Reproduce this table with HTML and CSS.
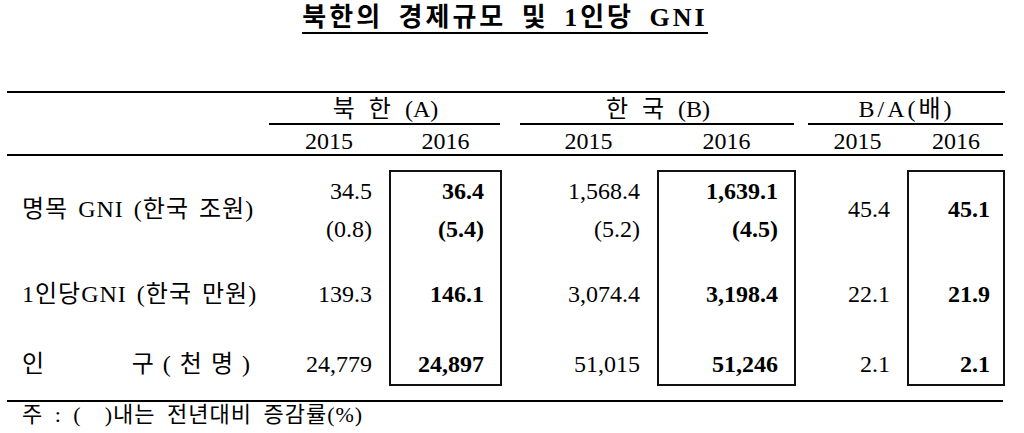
FILE: index.html
```html
<!DOCTYPE html>
<html>
<head>
    <title>북한의 경제규모 및 1인당 GNI</title>
    <link rel="stylesheet" href="styles.css">
</head>
<body>
    <div id="sheet">
        <div class="title"><span>북한의 경제규모 및 1인당 GNI</span></div>

        <div class="grid">
            <!-- group headers -->
            <div class="group g-nk">북 한 (A)</div>
            <div class="group g-sk">한 국 (B)</div>
            <div class="group g-ba">B/A(배)</div>
            <div class="subline s-nk"></div>
            <div class="subline s-sk"></div>
            <div class="subline s-ba"></div>

            <div class="year" style="grid-column: 2">2015</div>
            <div class="year" style="grid-column: 3">2016</div>
            <div class="year" style="grid-column: 5">2015</div>
            <div class="year" style="grid-column: 6">2016</div>
            <div class="year" style="grid-column: 8">2015</div>
            <div class="year" style="grid-column: 9">2016</div>
            <div class="headline"></div>

            <!-- highlighted 2016 columns -->
            <div class="box" style="grid-column: 3"></div>
            <div class="box" style="grid-column: 6"></div>
            <div class="box" style="grid-column: 9"></div>

            <!-- 명목 GNI -->
            <div class="label r-gni">명목 GNI (한국 조원)</div>
            <div class="num r-gni-a c-nk15">34.5</div>
            <div class="num r-gni-b c-nk15">(0.8)</div>
            <div class="num bold r-gni-a c-nk16">36.4</div>
            <div class="num bold r-gni-b c-nk16">(5.4)</div>
            <div class="num r-gni-a c-sk15">1,568.4</div>
            <div class="num r-gni-b c-sk15">(5.2)</div>
            <div class="num bold r-gni-a c-sk16">1,639.1</div>
            <div class="num bold r-gni-b c-sk16">(4.5)</div>
            <div class="num r-gni c-ba15">45.4</div>
            <div class="num bold r-gni c-ba16">45.1</div>

            <!-- 1인당 GNI -->
            <div class="label r-per">1인당GNI (한국 만원)</div>
            <div class="num r-per c-nk15">139.3</div>
            <div class="num bold r-per c-nk16">146.1</div>
            <div class="num r-per c-sk15">3,074.4</div>
            <div class="num bold r-per c-sk16">3,198.4</div>
            <div class="num r-per c-ba15">22.1</div>
            <div class="num bold r-per c-ba16">21.9</div>

            <!-- 인구 -->
            <div class="label plain r-pop"><span class="spread"><span>인</span><span class="unit">구 ( 천 명 )</span></span></div>
            <div class="num r-pop c-nk15">24,779</div>
            <div class="num bold r-pop c-nk16">24,897</div>
            <div class="num r-pop c-sk15">51,015</div>
            <div class="num bold r-pop c-sk16">51,246</div>
            <div class="num r-pop c-ba15">2.1</div>
            <div class="num bold r-pop c-ba16">2.1</div>
        </div>

        <div class="rule"></div>
        <div class="note">주 : (&nbsp;&nbsp;)내는 전년대비 증감률(%)</div>
    </div>
</body>
</html>
```

FILE: styles.css
```css
body {
    margin: 0;
    padding: 0;
    background-color: #fff;
    color: #000;
    font-family: "Liberation Serif", "Noto Sans CJK KR", serif;
}
#sheet {
    width: 998px;
    margin-left: 7px;
}
.title {
    text-align: center;
    padding-top: 4px;
    padding-right: 2px;
}
.title span {
    display: inline-block;
    font-size: 26px;
    font-weight: bold;
    line-height: 28px;
    letter-spacing: 3px;
    word-spacing: 6px;
    border-bottom: 2px solid #000;
}
.grid {
    margin-top: 57px;
    border-top: 2px solid #000;
    display: grid;
    grid-template-columns: 262px 120px 113px 18px 137px 139px 12px 99px 98px;
    grid-template-rows: 30px 2px 29px 2px 14px 41px 36px 94px 45px;
    font-size: 24px;
    line-height: 24px;
}
.group {
    grid-row: 1;
    display: flex;
    align-items: center;
    justify-content: center;
    padding-top: 2px;
    word-spacing: 8px;
}
.g-nk { grid-column: 2 / 4; }
.g-sk { grid-column: 5 / 7; }
.g-ba { grid-column: 8 / 10; letter-spacing: 3px; }
.subline {
    grid-row: 2;
    background-color: #000;
    margin-right: 2px;
}
.s-nk { grid-column: 2 / 4; }
.s-sk { grid-column: 5 / 7; }
.s-ba { grid-column: 8 / 10; }
.year {
    grid-row: 3;
    display: flex;
    align-items: center;
    justify-content: center;
    padding-top: 2px;
}
.headline {
    grid-row: 4;
    grid-column: 1 / 10;
    background-color: #000;
    margin-right: 2px;
}
.box {
    grid-row: 6 / 10;
    border: 2px solid #111;
}
.label {
    grid-column: 1;
    display: flex;
    align-items: center;
    padding-left: 15px;
    letter-spacing: 1px;
    word-spacing: 3px;
}
.label.plain {
    letter-spacing: 0;
    word-spacing: 0;
}
.spread {
    display: flex;
    justify-content: space-between;
    width: 228px;
}
.unit {
    word-spacing: 3px;
}
.num {
    display: flex;
    align-items: center;
    justify-content: flex-end;
    padding-right: 17px;
}
.bold {
    font-weight: bold;
}
.r-gni { grid-row: 6 / 8; }
.r-gni-a { grid-row: 6; }
.r-gni-b { grid-row: 7; }
.r-per { grid-row: 8; }
.r-pop { grid-row: 9; }
.c-nk15 { grid-column: 2; }
.c-nk16 { grid-column: 3; padding-right: 18px; }
.c-sk15 { grid-column: 5; }
.c-sk16 { grid-column: 6; padding-right: 18px; }
.c-ba15 { grid-column: 8; }
.c-ba16 { grid-column: 9; padding-right: 15px; }
.rule {
    margin-top: 14px;
    height: 2px;
    margin-right: 2px;
    background-color: #000;
}
.note {
    font-size: 22px;
    line-height: 26px;
    padding-left: 15px;
    letter-spacing: 1px;
    word-spacing: 5px;
}
```
